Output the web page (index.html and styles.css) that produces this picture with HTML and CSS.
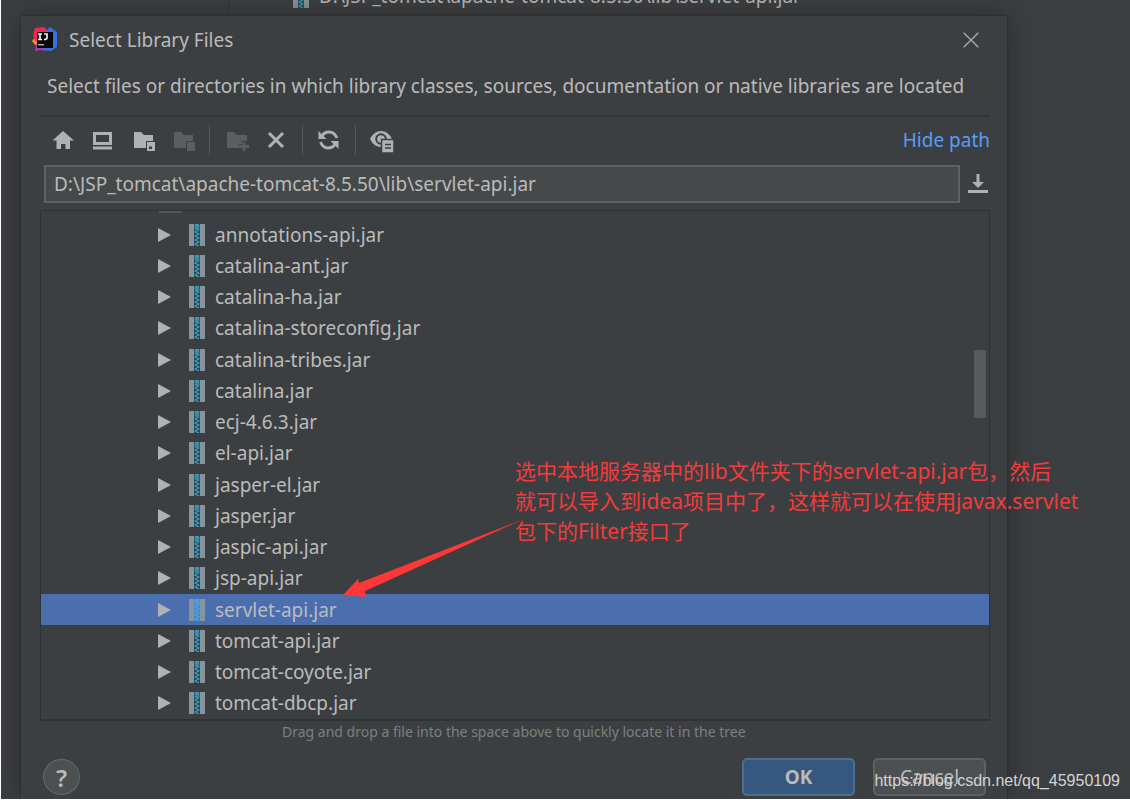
FILE: index.html
```html
<!DOCTYPE html>
<html lang="en">
<head>
<meta charset="utf-8">
<title>Select Library Files</title>
<link rel="stylesheet" href="styles.css">
</head>
<body>
<svg class="defs" aria-hidden="true">
  <symbol id="jar" viewBox="0 0 16 22">
    <path fill="#87949b" d="M0 0h5v22H0zM11 0h5v22h-5z"/>
    <path fill="var(--jar-core, #2b4752)" d="M5 0h6v22H5z"/>
    <path fill="none" stroke="var(--jar-zip, #3f9fbd)" stroke-width="1.3" d="M6 0l4 2-4 2 4 2-4 2 4 2-4 2 4 2-4 2 4 2-4 2 4 2M10 0L6 2l4 2-4 2" stroke-linejoin="round"/>
  </symbol>
  <symbol id="tri" viewBox="0 0 13 14"><path fill="#afb1b3" d="M0 0l13 7-13 7z"/></symbol>
</svg>
<div class="desktop">
  <div class="backdrop">
    <div class="side"></div>
    <div class="entry"><svg class="jar"><use href="#jar"/></svg><span>D:\JSP_tomcat\apache-tomcat-8.5.50\lib\servlet-api.jar</span></div>
  </div>
  <main class="dialog">
    <header class="titlebar">
      <svg class="logo" viewBox="0 0 26 26">
        <path fill="#fb8b1e" d="M0 14l4-5 3 9-4 0z"/>
        <path fill="#ef2857" d="M3 1l9-1 5 5-6 8-8 1-2-6z"/>
        <path fill="#a43bb5" d="M4 17l9 3 1 4-5-1-6 1z"/>
        <path fill="#376fe4" d="M14 4l4-4 7 5v15l-6 4-7-1z"/>
        <path fill="#080808" d="M5 5h16v16H5z"/>
        <path fill="none" stroke="#eee" stroke-width="1.7" d="M6 7h4M8 7v5M6 12.500h4M12 7h3v4q0 1.500-3 1.500"/>
        <path fill="#aaa" d="M6 17h6v1.500H6z"/>
      </svg>
      <h1>Select Library Files</h1>
      <button class="close" aria-label="Close"><svg width="16" height="16" viewBox="0 0 16 16"><path stroke="#a5a7a8" stroke-width="1.400" d="M.7.7l14.600 14.600M15.300.7L.7 15.300"/></svg></button>
    </header>
    <p class="desc">Select files or directories in which library classes, sources, documentation or native libraries are located</p>
    <div class="toolbar">
      <button aria-label="Home"><svg viewBox="0 0 24 24"><path fill="#afb1b3" d="M12 3l11 9.500h-4V21h-4.500v-5h-4.500v5H5.500v-8.500H1.500z"/></svg></button>
      <button aria-label="Desktop"><svg viewBox="0 0 24 24"><path fill="#afb1b3" fill-rule="evenodd" d="M2 4h19v13H2zM5 7v7h13V7zM2 18.500h19V21.500H2z"/></svg></button>
      <button aria-label="Project directory"><svg viewBox="0 0 24 24"><path fill="#afb1b3" d="M3 4h7l3 3h9v6h-7v7H3z"/><path fill="#afb1b3" fill-rule="evenodd" d="M16 14h8v9h-8zM18 18.500V21h3v-2.500z"/></svg></button>
      <button aria-label="Module directory" disabled><svg viewBox="0 0 24 24"><path fill="#5b5d5e" d="M3 4h7l3 3h9v6h-7v7H3zM16 14h8v9h-8z"/></svg></button>
      <span class="sep"></span>
      <button aria-label="New folder" disabled><svg viewBox="0 0 24 24"><path fill="#5b5d5e" d="M3 4h7l3 3h10v6h-5v3h-3v4H3z"/><path stroke="#5b5d5e" stroke-width="3" d="M15 18.500h10M20 14v9"/></svg></button>
      <button aria-label="Delete"><svg viewBox="0 0 24 24"><path stroke="#afb1b3" stroke-width="3" d="M5 5l14 14M19 5L5 19"/></svg></button>
      <span class="sep"></span>
      <button aria-label="Refresh"><svg viewBox="0 0 24 24"><path fill="none" stroke="#afb1b3" stroke-width="2.800" d="M4.500 8.500Q7 4 12 4q5.500 0 8 6M18.500 15.500Q16 20 11 20q-5 0-7.500-6"/><path fill="#afb1b3" d="M1.500 3v8h8zM21.500 21v-8h-8z"/></svg></button>
      <span class="sep"></span>
      <button aria-label="Show hidden files"><svg viewBox="0 0 24 24"><path fill="#afb1b3" d="M0 11Q4 3 11 3t11 8q-4 8-11 8T0 11z"/><circle cx="11" cy="11" r="4.800" fill="none" stroke="#3c3f41" stroke-width="2"/><path fill="#afb1b3" stroke="#3c3f41" stroke-width="1.500" d="M11.500 11.500h12.500v13.500H11.500z"/><path stroke="#3c3f41" stroke-width="1.500" d="M15 16.500h6M15 20h6"/></svg></button>
      <a href="#path">Hide path</a>
    </div>
    <div class="pathrow">
      <input id="path" aria-label="Path" value="D:\JSP_tomcat\apache-tomcat-8.5.50\lib\servlet-api.jar">
      <button aria-label="Path history"><svg width="20" height="20" viewBox="0 0 20 20"><path fill="#afb1b3" d="M8.500 0h3v8h4.500l-6 6-6-6h4.500zM0 16h20v3H0z"/></svg></button>
    </div>
    <div class="tree">
      <ul>
        <li><svg class="tri"><use href="#tri"/></svg><svg class="jar"><use href="#jar"/></svg>annotations-api.jar</li>
        <li><svg class="tri"><use href="#tri"/></svg><svg class="jar"><use href="#jar"/></svg>catalina-ant.jar</li>
        <li><svg class="tri"><use href="#tri"/></svg><svg class="jar"><use href="#jar"/></svg>catalina-ha.jar</li>
        <li><svg class="tri"><use href="#tri"/></svg><svg class="jar"><use href="#jar"/></svg>catalina-storeconfig.jar</li>
        <li><svg class="tri"><use href="#tri"/></svg><svg class="jar"><use href="#jar"/></svg>catalina-tribes.jar</li>
        <li><svg class="tri"><use href="#tri"/></svg><svg class="jar"><use href="#jar"/></svg>catalina.jar</li>
        <li><svg class="tri"><use href="#tri"/></svg><svg class="jar"><use href="#jar"/></svg>ecj-4.6.3.jar</li>
        <li><svg class="tri"><use href="#tri"/></svg><svg class="jar"><use href="#jar"/></svg>el-api.jar</li>
        <li><svg class="tri"><use href="#tri"/></svg><svg class="jar"><use href="#jar"/></svg>jasper-el.jar</li>
        <li><svg class="tri"><use href="#tri"/></svg><svg class="jar"><use href="#jar"/></svg>jasper.jar</li>
        <li><svg class="tri"><use href="#tri"/></svg><svg class="jar"><use href="#jar"/></svg>jaspic-api.jar</li>
        <li><svg class="tri"><use href="#tri"/></svg><svg class="jar"><use href="#jar"/></svg>jsp-api.jar</li>
        <li class="selected"><svg class="tri"><use href="#tri"/></svg><svg class="jar"><use href="#jar"/></svg>servlet-api.jar</li>
        <li><svg class="tri"><use href="#tri"/></svg><svg class="jar"><use href="#jar"/></svg>tomcat-api.jar</li>
        <li><svg class="tri"><use href="#tri"/></svg><svg class="jar"><use href="#jar"/></svg>tomcat-coyote.jar</li>
        <li><svg class="tri"><use href="#tri"/></svg><svg class="jar"><use href="#jar"/></svg>tomcat-dbcp.jar</li>
      </ul>
      <span class="clipped"></span>
      <span class="thumb"></span>
    </div>
    <p class="hint">Drag and drop a file into the space above to quickly locate it in the tree</p>
    <footer class="actions">
      <button class="help" aria-label="Help">?</button>
      <button class="btn primary">OK</button>
      <button class="btn">Cancel</button>
    </footer>
  </main>
  <svg class="arrow" viewBox="0 0 184 80"><path fill="#ff3737" d="M182 0L17 64l-1-4L1 76l23 2-1-6z"/></svg>
  <p class="note" lang="zh-CN">选中本地服务器中的lib文件夹下的servlet-api.jar包，然后<br>就可以导入到idea项目中了，这样就可以在使用javax.servlet<br>包下的Filter接口了</p>
  <span class="watermark">https://blog.csdn.net/qq_45950109</span>
</div>
</body>
</html>
```
FILE: styles.css
```css
* { box-sizing: border-box; }
body { margin: 0; background: #fff; font-family: "Noto Sans", "Noto Sans CJK SC", sans-serif; font-size: 19px; color: #bbb; }
h1, p, ul { margin: 0; padding: 0; font-size: inherit; font-weight: 400; }
button { padding: 0; border: 0; background: none; font: inherit; color: inherit; display: flex; align-items: center; justify-content: center; }
.defs { position: absolute; width: 0; height: 0; }
.desktop { position: relative; display: flex; flex-direction: column; min-height: calc(100vh - 1px); margin: 0 0 1px 1px; background: #3c3f41; overflow: hidden; }
.backdrop { display: flex; height: 16px; overflow: hidden; }
.side { width: 228px; border-right: 1px solid #323536; }
.entry { display: flex; align-items: flex-end; height: 8px; padding-left: 64px; gap: 10px; line-height: 24px; white-space: nowrap; }
.jar { width: 16px; height: 22px; flex: none; }
.dialog { flex: 1; display: flex; flex-direction: column; margin: 0 123px 0 20px; padding: 0 17px 0 19px; box-shadow: 0 0 26px rgba(30, 22, 22, .5), 0 0 2px rgba(30, 25, 25, .6); background: #3c3f41; }
.titlebar { display: flex; align-items: center; height: 48px; padding: 0 10px 0 0; margin-left: -8px; gap: 11px; }
.logo { width: 26px; height: 26px; }
.close { margin-left: auto; width: 18px; height: 24px; }
.desc { height: 53px; padding-left: 7px; line-height: 44px; border-bottom: 2px solid #323435; white-space: nowrap; }
.toolbar { display: flex; align-items: center; height: 46px; margin-bottom: 2px; padding-left: 3px; }
.toolbar button { width: 40px; height: 32px; }
.toolbar svg { width: 24px; height: 24px; overflow: visible; }
.sep { width: 1px; height: 30px; margin: 0 6px; background: #55585a; }
.toolbar a { margin-left: auto; color: #589df6; text-decoration: none; }
.pathrow { display: flex; align-items: center; gap: 8px; padding: 0 2px 0 4px; margin-bottom: 7px; }
.pathrow input { flex: 1; min-width: 0; height: 38px; padding: 0 8px; border: 2px solid #5f6162; background: #45494a; color: #bbb; font: inherit; }
.tree { position: relative; border: 1px solid #303233; border-bottom-width: 2px; padding-top: 8px; }
.tree ul { display: grid; grid-template-rows: repeat(16, 1fr); min-height: 500px; list-style: none; }
.tree li { display: flex; align-items: center; padding-left: 117px; min-height: 0; line-height: 30px; }
.tree .selected { background: #4b6eaf; --jar-core: #4a86c8; --jar-zip: #4fa3dc; }
.tri { width: 13px; height: 14px; margin-right: 18px; }
.tree .jar { margin-right: 10px; }
.clipped { position: absolute; top: 0; left: 118px; width: 22px; height: 2px; background: #55585a; }
.thumb { position: absolute; top: 139px; right: 3px; width: 12px; height: 68px; background: #57595a; }
.hint { padding-left: 242px; font-size: 14px; line-height: 20px; color: #7d7f80; margin-top: 1px; }
.actions { display: flex; align-items: center; gap: 18px; margin-top: 16px; padding: 0 4px 0 3px; height: 38px; }
.help { width: 37px; height: 36px; margin-right: auto; border: 1px solid #646768; border-radius: 50%; background: #4c5052; font-size: 24px; font-weight: 600; }
.btn { width: 113px; height: 38px; border: 2px solid #5e6162; border-radius: 5px; background: #4c5052; }
.primary { border-color: #4c708c; background: #365880; font-weight: 700; }
.arrow { position: absolute; left: 341px; top: 519px; width: 184px; height: 80px; }
.note { position: absolute; left: 514px; top: 456px; font-size: 21px; line-height: 30px; color: #f33b3b; white-space: nowrap; }
.watermark { position: absolute; right: 10px; bottom: 8px; font: 16px/20px "Liberation Sans", sans-serif; color: #d4d4d4; }
```
